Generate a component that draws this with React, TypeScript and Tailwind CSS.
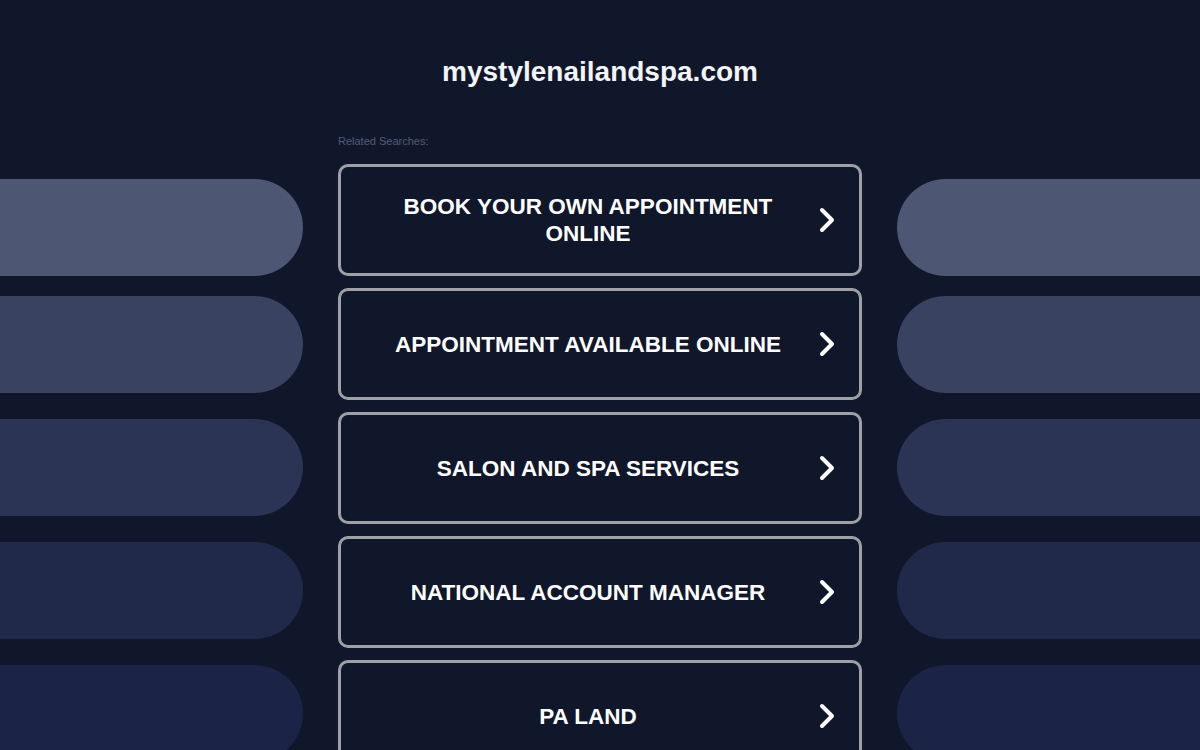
const searches = [
  "BOOK YOUR OWN APPOINTMENT ONLINE",
  "APPOINTMENT AVAILABLE ONLINE",
  "SALON AND SPA SERVICES",
  "NATIONAL ACCOUNT MANAGER",
  "PA LAND",
];

const pillColors = ["bg-[#4d5672]", "bg-[#3a4262]", "bg-[#2c3455]", "bg-[#20294a]", "bg-[#1b2446]"];

function Chevron() {
  return (
    <svg width="24" height="28" viewBox="0 0 24 28" fill="none" aria-hidden="true">
      <polyline points="7,4 17,14 7,24" stroke="#ffffff" strokeWidth="4" strokeLinecap="round" strokeLinejoin="round" />
    </svg>
  );
}

function SideColumn({ side }: { side: "left" | "right" }) {
  return (
    <div className="flex w-[303px] flex-col gap-[26px] pt-[46px]">
      {pillColors.map((color, i) => (
        <div
          key={color}
          className={[
            "h-[97px] w-full shrink-0",
            color,
            side === "left" ? "rounded-r-full" : "rounded-l-full",
            i === 0 ? "mb-[-6px]" : "",
          ].join(" ")}
        />
      ))}
    </div>
  );
}

export default function App() {
  return (
    <div className="h-[750px] overflow-hidden bg-[#11172b] font-['Liberation_Sans',Arial,sans-serif]">
      <div className="h-[133px] pt-[55px] text-center">
        <h1 className="text-[28px] font-bold leading-[34px] text-[#f3f4f6]">mystylenailandspa.com</h1>
      </div>
      <div className="flex gap-[35px]">
        <SideColumn side="left" />
        <div className="w-[524px] shrink-0">
          <p className="mb-[15px] pt-[1px] text-[11px] leading-[15px] text-[#515b7a]">Related Searches:</p>
          <div className="flex flex-col gap-3">
            {searches.map((s) => (
              <a
                key={s}
                href="#"
                className="flex h-[112px] items-center rounded-[10px] border-[3px] border-[#9fa0a6] bg-[#11172b] px-5"
              >
                <span className="flex-1 px-5 text-center text-[22.5px] font-bold leading-[27px] text-white">{s}</span>
                <span className="flex w-6 justify-center">
                  <Chevron />
                </span>
              </a>
            ))}
          </div>
        </div>
        <SideColumn side="right" />
      </div>
    </div>
  );
}
